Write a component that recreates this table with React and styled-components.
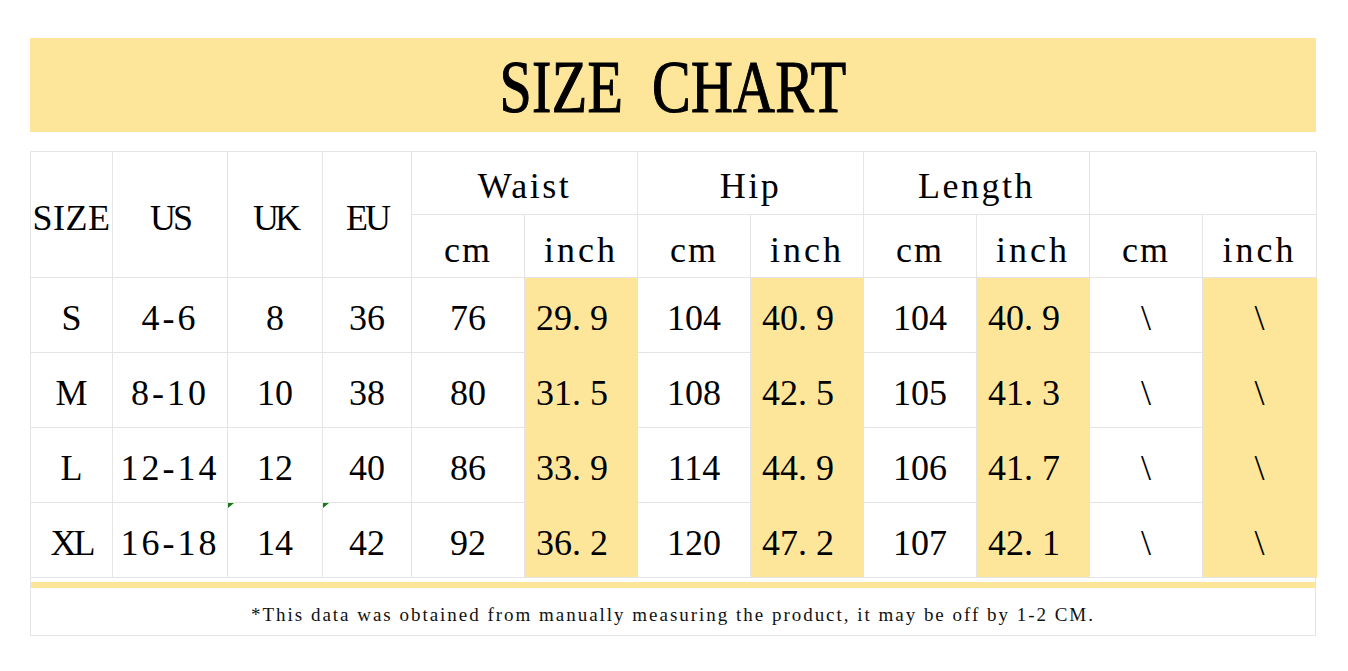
import React from "react";
import styled, { createGlobalStyle } from "styled-components";

const Global = createGlobalStyle`
  html, body { margin: 0; padding: 0; background: #ffffff; }
  body { font-family: "Liberation Serif", "Times New Roman", serif; color: #000; }
  * { box-sizing: border-box; }
`;

const YELLOW = "#FDE69A";
const LINE = "#E4E4E4";

const Page = styled.div`
  width: 1348px;
  padding: 38px 32px 0 30px;
`;

const Banner = styled.div`
  height: 94px;
  background: ${YELLOW};
  display: flex;
  align-items: center;
  justify-content: center;
  padding-top: 6px;
`;

const Title = styled.h1`
  margin: 0;
  display: inline-block;
  font-family: "Liberation Serif", "Times New Roman", serif;
  font-weight: 400;
  font-size: 58px;
  letter-spacing: 0.3px;
  word-spacing: 14px;
  line-height: 1;
  -webkit-text-stroke: 0.9px #000;
  transform: scaleY(1.28);
`;

const Grid = styled.div`
  margin-top: 19px;
  display: grid;
  grid-template-columns: 82px 115px 95px 89px repeat(7, 113px) 114px;
  grid-template-rows: 63px 63px repeat(4, 75px);
  border-top: 1px solid ${LINE};
  border-left: 1px solid ${LINE};
`;

const Cell = styled.div`
  position: relative;
  display: flex;
  align-items: center;
  justify-content: center;
  font-size: 36px;
  line-height: 1;
  white-space: nowrap;
  letter-spacing: ${(p) => p.$ls || 0}px;
  padding-top: ${(p) => p.$pt ?? 6}px;
  padding-right: ${(p) => p.$pr || 0}px;
  border-right: 1px solid ${(p) => (p.$hl && !p.$edge ? YELLOW : LINE)};
  border-bottom: 1px solid ${(p) => (p.$hl && !p.$last ? YELLOW : LINE)};
  background: ${(p) => (p.$hl ? YELLOW : "#fff")};
  grid-row: ${(p) => p.$row || "auto"};
  grid-column: ${(p) => p.$col || "auto"};
  ${(p) => (p.$edge && p.$hl ? `border-right-color: ${YELLOW};` : "")}
`;

const Dot = styled.span`
  padding-right: 9px;
`;

const Marker = styled.span`
  position: absolute;
  left: 0;
  top: 0;
  width: 6px;
  height: 5px;
  background: #137a13;
  clip-path: polygon(0 0, 100% 0, 0 100%);
`;

const Footer = styled.div`
  border: 1px solid ${LINE};
  border-top: none;
  padding-top: 4px;
`;

const Band = styled.div`
  height: 6px;
  background: ${YELLOW};
`;

const Note = styled.p`
  margin: 0;
  height: 47px;
  display: flex;
  align-items: center;
  justify-content: center;
  padding-top: 6px;
  font-family: "Liberation Serif", "Times New Roman", serif;
  font-size: 19px;
  letter-spacing: 1.98px;
  color: #111;
`;

const Decimal = ({ v }) => {
  const [a, b] = v.split(".");
  return (
    <>
      {a}
      <Dot>.</Dot>
      {b}
    </>
  );
};

const rows = [
  { s: "S", us: "4-6", uk: "8", eu: "36", w: ["76", "29.9"], h: ["104", "40.9"], l: ["104", "40.9"] },
  { s: "M", us: "8-10", uk: "10", eu: "38", w: ["80", "31.5"], h: ["108", "42.5"], l: ["105", "41.3"] },
  { s: "L", us: "12-14", uk: "12", eu: "40", w: ["86", "33.9"], h: ["114", "44.9"], l: ["106", "41.7"] },
  { s: "XL", us: "16-18", uk: "14", eu: "42", w: ["92", "36.2"], h: ["120", "47.2"], l: ["107", "42.1"], mark: true },
];

export default function App() {
  return (
    <Page>
      <Global />
      <Banner>
        <Title>SIZE CHART</Title>
      </Banner>
      <Grid>
        <Cell $row="1 / 3" $col="1" $ls={0.5}>SIZE</Cell>
        <Cell $row="1 / 3" $col="2" $ls={-3}>US</Cell>
        <Cell $row="1 / 3" $col="3" $ls={-4}>UK</Cell>
        <Cell $row="1 / 3" $col="4" $ls={-3}>EU</Cell>
        <Cell $col="5 / 7" $ls={2.5}>Waist</Cell>
        <Cell $col="7 / 9" $ls={2.5}>Hip</Cell>
        <Cell $col="9 / 11" $ls={2.5}>Length</Cell>
        <Cell $col="11 / 13" />
        {["cm", "inch", "cm", "inch", "cm", "inch", "cm", "inch"].map((t, i) => (
          <Cell key={i} $ls={t === "inch" ? 3 : 2} $pt={8}>
            {t}
          </Cell>
        ))}
        {rows.map((r, i) => {
          const last = i === rows.length - 1;
          return (
            <React.Fragment key={r.s}>
              <Cell $ls={r.s === "XL" ? -3 : 0}>{r.s}</Cell>
              <Cell $ls={3}>{r.us}</Cell>
              <Cell>
                {r.mark && <Marker />}
                {r.uk}
              </Cell>
              <Cell>
                {r.mark && <Marker />}
                {r.eu}
              </Cell>
              <Cell>{r.w[0]}</Cell>
              <Cell $hl $last={last} $pr={18}>
                <Decimal v={r.w[1]} />
              </Cell>
              <Cell>{r.h[0]}</Cell>
              <Cell $hl $last={last} $pr={18}>
                <Decimal v={r.h[1]} />
              </Cell>
              <Cell>{r.l[0]}</Cell>
              <Cell $hl $last={last} $pr={18}>
                <Decimal v={r.l[1]} />
              </Cell>
              <Cell>\</Cell>
              <Cell $hl $last={last} $edge>
                \
              </Cell>
            </React.Fragment>
          );
        })}
      </Grid>
      <Footer>
        <Band />
        <Note>*This data was obtained from manually measuring the product, it may be off by 1-2 CM.</Note>
      </Footer>
    </Page>
  );
}
